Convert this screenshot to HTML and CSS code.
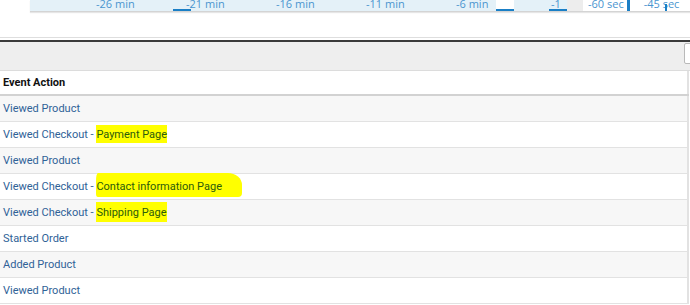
FILE: index.html
```html
<!DOCTYPE html>
<html lang="en">
<head>
  <meta charset="UTF-8" />
  <title>Visitor Log</title>
  <link rel="stylesheet" href="styles.css">
</head>
<body>
  <div class="timeline">
    <div class="range">
      <span class="tick">-26 min</span>
      <span class="tick">-21 min</span>
      <span class="tick">-16 min</span>
      <span class="tick">-11 min</span>
      <span class="tick">-6 min</span>
      <span class="marker"></span>
    </div>
    <div class="slot slot-white"></div>
    <div class="slot slot-blue"></div>
    <div class="slot slot-last"><span class="tick">-1</span></div>
    <div class="slot slot-gray"></div>
    <div class="seconds">
      <span class="tick">-60 sec</span>
      <span class="bar"></span>
      <span class="tick tick-sec">-45 sec</span>
      <span class="pin"></span>
    </div>
  </div>

  <div class="toolbar">
    <input type="text" class="search" />
  </div>

  <table class="log">
    <thead>
      <tr><th>Event Action</th></tr>
    </thead>
    <tbody>
      <tr><td>Viewed Product</td></tr>
      <tr><td>Viewed Checkout - <mark class="hl">Payment Page</mark></td></tr>
      <tr><td>Viewed Product</td></tr>
      <tr><td>Viewed Checkout - <mark class="hl hl-wavy">Contact information Page</mark></td></tr>
      <tr><td>Viewed Checkout - <mark class="hl hl-tall">Shipping Page</mark></td></tr>
      <tr><td>Started Order</td></tr>
      <tr><td>Added Product</td></tr>
      <tr><td>Viewed Product</td></tr>
    </tbody>
  </table>
</body>
</html>
```

FILE: styles.css
```css
body {
  margin: 0;
  font-family: Roboto, "Liberation Sans", sans-serif;
  background: #fff;
  width: 690px;
  height: 305px;
  overflow: hidden;
}

/* timeline strip, cut off at the top */
.timeline {
  display: flex;
  height: 11px;
  margin-left: 30px;
  border-bottom: 1px solid #d4d4d4;
  box-shadow: 0 1px 1px #e6e6e6;
  overflow: hidden;
  font-family: "Open Sans", sans-serif;
  font-size: 11px;
  color: #4a95cf;
}

.tick {
  display: block;
  line-height: 11px;
  margin-top: -2px;
  white-space: nowrap;
}

.range {
  position: relative;
  display: flex;
  width: 400px;
  padding-left: 66px;
  background: #e4f1f8;
}

.range .tick {
  width: 90px;
  flex: none;
}

.marker {
  position: absolute;
  left: 143px;
  bottom: 0;
  width: 18px;
  height: 2px;
  background: #1a7fc6;
}

.slot {
  flex: none;
  box-sizing: border-box;
  height: 11px;
}

.slot-white {
  width: 18px;
  background: #fff;
  border-bottom: 2px solid #1a7fc6;
}

.slot-blue {
  width: 35px;
  background: #e4f1f8;
}

.slot-last {
  width: 18px;
  padding-left: 2px;
  background: #e4f1f8;
  border-bottom: 2px solid #1a7fc6;
}

.slot-gray {
  width: 16px;
  background: #ededed;
}

.seconds {
  position: relative;
  display: flex;
  flex: 1;
  padding-left: 5px;
  background: #fff;
}

.bar {
  width: 3px;
  height: 11px;
  margin-left: 3px;
  background: #1a7fc6;
}

.tick-sec {
  margin-left: 14px;
}

.pin {
  position: absolute;
  left: 82px;
  top: 4px;
  width: 2px;
  height: 8px;
  background: #1a7fc6;
}

/* filter toolbar */
.toolbar {
  display: flex;
  justify-content: flex-end;
  height: 27px;
  margin-top: 28px;
  padding-top: 1px;
  background: #eeeeee;
  border-top: 2px solid #3a3a3a;
  border-bottom: 1px solid #dcdcdc;
  box-shadow: 0 -2px 0 #fff, 0 -3px 0 #dedede;
}

.search {
  width: 20px;
  height: 21px;
  margin: 0 -14px 0 0;
  padding: 0;
  box-sizing: border-box;
  border: 1px solid #b9b9b9;
  border-radius: 2px;
  background: #fff;
}

/* event table */
.log {
  width: 689px;
  border-collapse: collapse;
  font-size: 11px;
  border-right: 2px solid #e2e2e2;
}

.log th {
  height: 23px;
  padding: 0 3px;
  text-align: left;
  font-weight: bold;
  color: #111;
  background: #fff;
  border-bottom: 2px solid #d2d2d2;
}

.log td {
  height: 25px;
  padding: 0 3px;
  color: #2f6297;
  border-bottom: 1px solid #e2e2e2;
}

.log tbody tr:nth-child(odd) td {
  background: #f7f7f7;
}

.hl {
  background: #ffff00;
  color: #2c5c0c;
  padding: 3px 0 2px;
}

.hl-wavy {
  padding: 7px 20px 4px 0;
  border-radius: 2px 14px 4px 2px / 8px 12px 4px 3px;
}

.hl-tall {
  padding: 4px 0 3px;
}
```
